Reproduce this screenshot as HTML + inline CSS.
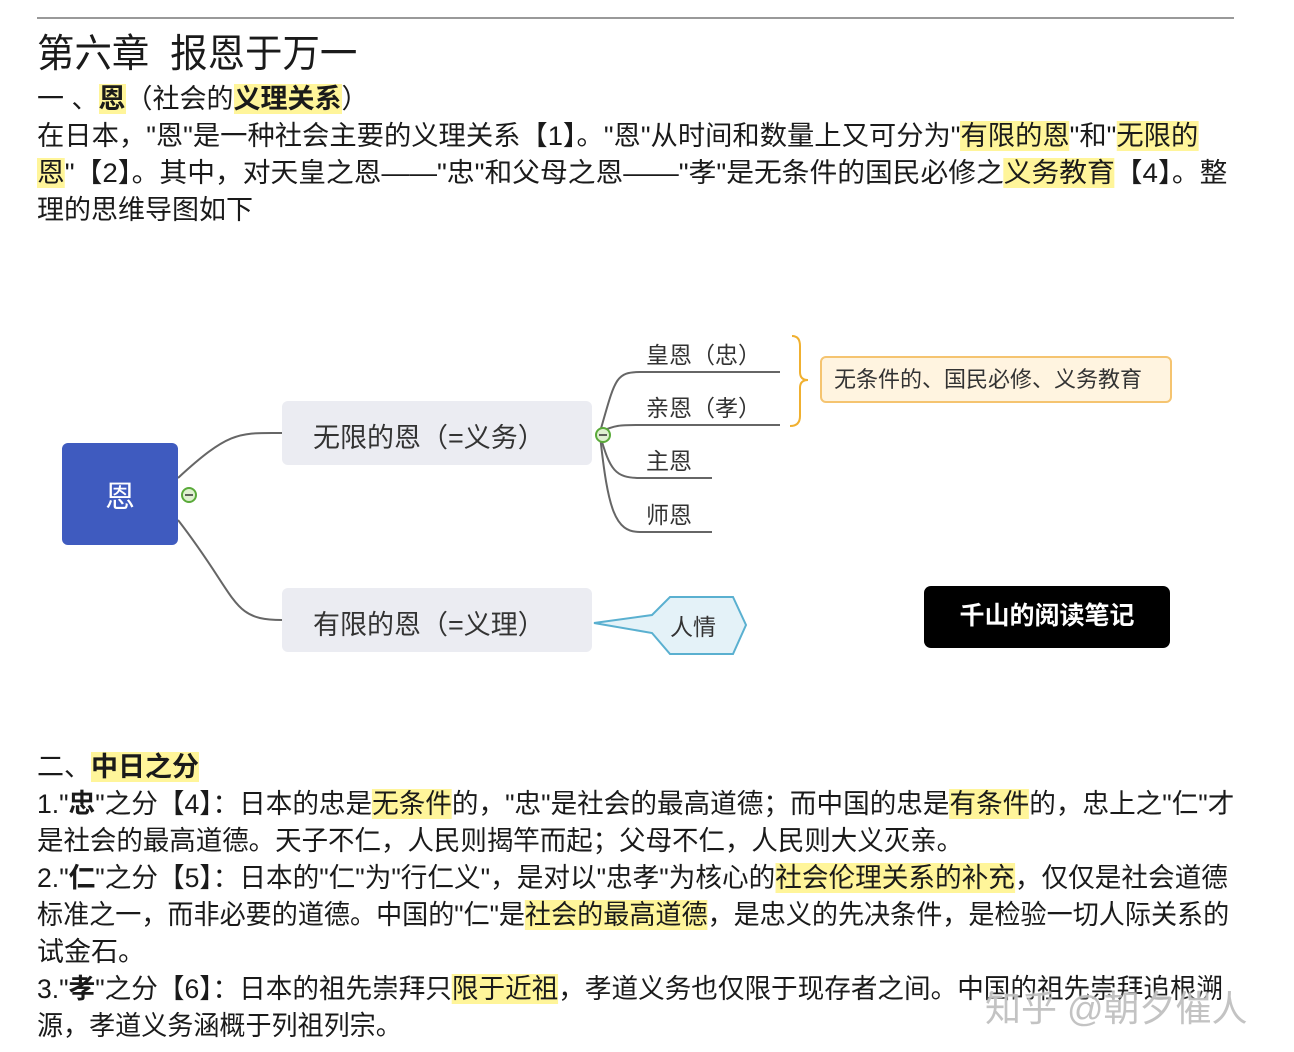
<!DOCTYPE html>
<html><head><meta charset="utf-8"><style>
body{margin:0;width:1294px;height:1052px;background:#fff;position:relative;overflow:hidden;font-family:"Liberation Sans","Noto Sans CJK SC",sans-serif;color:#1a1a1a}
.l{position:absolute;left:37px;white-space:nowrap;font-size:27px;line-height:37px;transform-origin:0 50%}
.h{background:#fff59a}
b{font-weight:bold}
.n{position:absolute;font-size:25px;color:#333;white-space:nowrap}
</style></head><body>
<div style="position:absolute;left:37px;top:17px;width:1197px;height:2px;background:#999"></div>
<div class="l" style="top:30px;font-size:39px;line-height:50px;transform:scaleX(0.96)">第六章&nbsp; 报恩于万一</div>
<div class="l" style="top:81px">一 、<b class="h">恩</b>（社会的<b class="h">义理关系</b>）</div>
<div class="l" style="top:118px;transform:scaleX(1.011)">在日本，"恩"是一种社会主要的义理关系【1】。"恩"从时间和数量上又可分为"<span class="h">有限的恩</span>"和"<span class="h">无限的</span></div>
<div class="l" style="top:155px;transform:scaleX(1.028)"><span class="h">恩</span>"【2】。其中，对天皇之恩——"忠"和父母之恩——"孝"是无条件的国民必修之<span class="h">义务教育</span>【4】。整</div>
<div class="l" style="top:192px">理的思维导图如下</div>

<svg style="position:absolute;left:0;top:0" width="1294" height="1052">
<g fill="none" stroke="#666" stroke-width="2">
<path d="M178 478 C230 430,240 433,282 433"/>
<path d="M178 520 C240 600,230 620,282 620"/>
<path d="M600 432 C615 380,615 372,640 372 L780 372"/>
<path d="M600 432 C615 425,620 425,640 425 L780 425"/>
<path d="M600 435 C610 470,615 478,640 478 L712 478"/>
<path d="M600 435 C608 510,615 532,640 532 L712 532"/>
</g>
<path d="M792 336 Q800 336,800 346 L800 372 Q800 380,808 380 Q800 380,800 388 L800 416 Q800 426,790 426" fill="none" stroke="#f0b030" stroke-width="2"/>
<circle cx="189" cy="495" r="7" fill="#dff0d0" stroke="#5aaa3a" stroke-width="2"/><line x1="185" y1="495" x2="193" y2="495" stroke="#333" stroke-width="1.5"/>
<circle cx="603" cy="435" r="7" fill="#dff0d0" stroke="#5aaa3a" stroke-width="2"/><line x1="599" y1="435" x2="607" y2="435" stroke="#333" stroke-width="1.5"/>
<polygon points="594,623 652,615 670,597 733,597 746,625 733,654 670,654 652,633" fill="#e4f2f8" stroke="#5ab0d0" stroke-width="2"/>
</svg>
<div style="position:absolute;left:62px;top:443px;width:116px;height:102px;background:#3f5bbf;border-radius:6px;color:#fff;font-size:30px;display:flex;align-items:center;justify-content:center">恩</div>
<div style="position:absolute;left:282px;top:401px;width:310px;height:64px;background:#ebecf2;border-radius:6px"></div>
<div class="n" style="left:313px;top:416px;font-size:27px">无限的恩（=义务）</div>
<div style="position:absolute;left:282px;top:588px;width:310px;height:64px;background:#ebecf2;border-radius:6px"></div>
<div class="n" style="left:313px;top:603px;font-size:27px">有限的恩（=义理）</div>
<div class="n" style="left:646px;top:336px;font-size:23px">皇恩（忠）</div>
<div class="n" style="left:646px;top:389px;font-size:23px">亲恩（孝）</div>
<div class="n" style="left:646px;top:442px;font-size:23px">主恩</div>
<div class="n" style="left:646px;top:496px;font-size:23px">师恩</div>
<div class="n" style="left:670px;top:608px;font-size:23px">人情</div>
<div style="position:absolute;left:820px;top:356px;width:352px;height:47px;background:#fff4e0;border:2px solid #f5c470;border-radius:6px;box-sizing:border-box;font-size:22px;color:#333;line-height:43px;padding-left:12px">无条件的、国民必修、义务教育</div>
<div style="position:absolute;left:924px;top:586px;width:246px;height:62px;background:#000;border-radius:7px;color:#fff;font-size:25px;line-height:60px;text-align:center;font-weight:bold">千山的阅读笔记</div>

<div class="l" style="top:749px">二、<b class="h">中日之分</b></div>
<div class="l" style="top:786px;transform:scaleX(0.985)">1."<b>忠</b>"之分【4】：日本的忠是<span class="h">无条件</span>的，"忠"是社会的最高道德；而中国的忠是<span class="h">有条件</span>的，忠上之"仁"才</div>
<div class="l" style="top:823px;transform:scaleX(0.98)">是社会的最高道德。天子不仁，人民则揭竿而起；父母不仁，人民则大义灭亲。</div>
<div class="l" style="top:860px;transform:scaleX(0.986)">2."<b>仁</b>"之分【5】：日本的"仁"为"行仁义"，是对以"忠孝"为核心的<span class="h">社会伦理关系的补充</span>，仅仅是社会道德</div>
<div class="l" style="top:897px;transform:scaleX(0.966)">标准之一，而非必要的道德。中国的"仁"是<span class="h">社会的最高道德</span>，是忠义的先决条件，是检验一切人际关系的</div>
<div class="l" style="top:934px">试金石。</div>
<div class="l" style="top:971px;transform:scaleX(0.985)">3."<b>孝</b>"之分【6】：日本的祖先崇拜只<span class="h">限于近祖</span>，孝道义务也仅限于现存者之间。中国的祖先崇拜追根溯</div>
<div class="l" style="top:1008px;transform:scaleX(0.965)">源，孝道义务涵概于列祖列宗。</div>
<div style="position:absolute;left:985px;top:980px;font-size:36px;color:rgba(185,185,185,0.85);white-space:nowrap;text-shadow:0 0 2px #fff">知乎 @朝夕催人</div>
</body></html>
